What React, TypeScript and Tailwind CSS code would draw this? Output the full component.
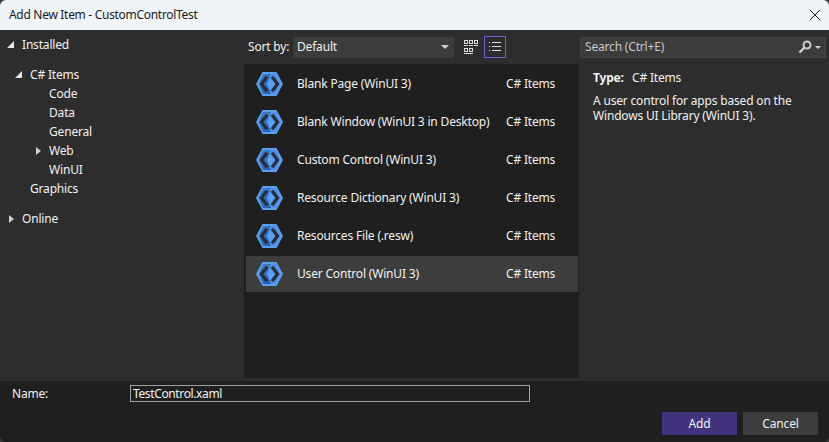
import { X } from 'lucide-react'
import type { ReactNode } from 'react'

const items = [
    'Blank Page (WinUI 3)',
    'Blank Window (WinUI 3 in Desktop)',
    'Custom Control (WinUI 3)',
    'Resource Dictionary (WinUI 3)',
    'Resources File (.resw)',
    'User Control (WinUI 3)',
]

function WinUiIcon() {
    return (
        <svg width="27" height="24" viewBox="0 0 27 24" className="shrink-0">
            <defs>
                <linearGradient id="winui-left" x1="0" y1="0" x2="1" y2="1">
                    <stop offset="0" stopColor="#3f86dc" />
                    <stop offset="1" stopColor="#1f5ca8" />
                </linearGradient>
            </defs>
            <polygon points="6.5,0 20.5,0 27,12 20.5,24 6.5,24 0,12" fill="#5a9ff0" />
            <polygon points="7,2 15,2 11,12 15,22 7,22 2.5,12" fill="url(#winui-left)" />
            <polygon points="15,2 20,2 24.5,12 20,22 15,22 19,12" fill="#4f8fe6" />
            <polygon points="9.5,4 12.5,5.5 7.5,12 12.5,18.5 9.5,20 3.5,12" fill="#2a2c32" />
            <polygon points="17.5,4 14.5,5.5 19.5,12 14.5,18.5 17.5,20 23.5,12" fill="#2a2c32" />
        </svg>
    )
}

function Expanded() {
    return <span className="w-0 h-0 border-l-[7px] border-l-transparent border-b-[7px] border-b-[#e6e6e6]" />
}

function Collapsed() {
    return <span className="w-0 h-0 border-y-[4px] border-y-transparent border-l-[5px] border-l-[#d0d0d0]" />
}

function TreeRow({ label, indent, icon }: { label: string; indent: string; icon?: ReactNode }) {
    return (
        <div className={`h-[19px] flex items-center ${indent}`}>
            {icon}
            <span>{label}</span>
        </div>
    )
}

export default function App() {
    return (
        <div className="w-[829px] h-[442px] bg-[#3a3a3a]">
            <div className="w-full h-full flex flex-col overflow-hidden rounded-[6px] bg-[#2d2d2d] text-[12px] tracking-[-0.18px] text-[#f1f1f1] font-['Noto_Sans','Open_Sans',sans-serif]">
                {/* Title bar */}
                <div className="h-[30px] shrink-0 bg-[#eff4f9] text-[#1a1a1a] flex items-center justify-between pl-[9px] pr-[4px]">
                    <span className="tracking-[-0.3px]">Add New Item - CustomControlTest</span>
                    <X size={20} strokeWidth={1.2} className="text-[#222] mb-[1px]" />
                </div>

                <div className="flex-1 flex min-h-0">
                    {/* Tree */}
                    <div className="w-[244px] shrink-0 pt-[5px]">
                        <TreeRow label="Installed" indent="pl-[7px] gap-[8px] mb-[11px]" icon={<Expanded />} />
                        <TreeRow label="C# Items" indent="pl-[15px] gap-[8px]" icon={<Expanded />} />
                        <TreeRow label="Code" indent="pl-[49px]" />
                        <TreeRow label="Data" indent="pl-[49px]" />
                        <TreeRow label="General" indent="pl-[49px]" />
                        <TreeRow label="Web" indent="pl-[36px] gap-[8px]" icon={<Collapsed />} />
                        <TreeRow label="WinUI" indent="pl-[49px]" />
                        <TreeRow label="Graphics" indent="pl-[30px]" />
                        <TreeRow label="Online" indent="pl-[9px] gap-[8px] mt-[11px]" icon={<Collapsed />} />
                    </div>

                    {/* Center */}
                    <div className="w-[335px] shrink-0 flex flex-col pb-[3px]">
                        <div className="h-[34px] shrink-0 flex items-center pl-[4px]">
                            <span className="w-[46px]">Sort by:</span>
                            <div className="w-[161px] h-[21px] ml-[-1px] bg-[#3c3c3c] flex items-center justify-between pl-[4px] pr-[5px]">
                                <span>Default</span>
                                <span className="w-0 h-0 border-x-[4px] border-x-transparent border-t-[4px] border-t-[#d0d0d0]" />
                            </div>
                            <div className="w-[23px] h-[22px] ml-[7px] pl-[3px] flex items-center">
                                <svg width="14" height="14" viewBox="0 0 14 14" fill="none" stroke="#e0e0e0">
                                    <rect x="0.5" y="0.5" width="3" height="3" /><rect x="5.5" y="0.5" width="3" height="3" /><rect x="10.5" y="0.5" width="3" height="3" />
                                    <path d="M0 5.5H4M5 5.5H9M10 5.5H14" />
                                    <rect x="0.5" y="8.5" width="3" height="3" /><rect x="5.5" y="8.5" width="3" height="3" />
                                    <path d="M0 13.5H9" />
                                </svg>
                            </div>
                            <div className="w-[22px] h-[22px] border border-[#6e5fe0] flex items-center justify-center">
                                <svg width="12" height="12" viewBox="0 0 12 12" fill="#e0e0e0">
                                    <rect x="0" y="1" width="1" height="1" /><rect x="3" y="1" width="9" height="1" />
                                    <rect x="0" y="5" width="1" height="1" /><rect x="3" y="5" width="9" height="1" />
                                    <rect x="0" y="9" width="1" height="1" /><rect x="3" y="9" width="9" height="1" />
                                </svg>
                            </div>
                        </div>
                        <div className="flex-1 bg-[#1f1f1f] pt-[1px]">
                            {items.map((item, index) => (
                                <div className="h-[38px] py-[1px] pl-[2px] pr-[1px]" key={index}>
                                    <div className={`h-full flex items-center pl-[10px] ${index === 5 ? 'bg-[#3d3d3d]' : ''}`}>
                                        <WinUiIcon />
                                        <span className="ml-[14px] w-[209px] whitespace-nowrap">{item}</span>
                                        <span>C# Items</span>
                                    </div>
                                </div>
                            ))}
                        </div>
                    </div>

                    {/* Details */}
                    <div className="flex-1 flex flex-col pl-[1px]">
                        <div className="h-[34px] shrink-0 flex items-center">
                            <div className="w-[246px] h-[21px] bg-[#3c3c3c] border border-[#444] flex items-center justify-between pl-[4px] pr-[4px] text-[#c8c8c8]">
                                <span>Search (Ctrl+E)</span>
                                <span className="flex items-center gap-[3px]">
                                    <svg width="14" height="14" viewBox="0 0 14 14" fill="none" stroke="#d0d0d0">
                                        <circle cx="9" cy="5" r="3.5" strokeWidth="2" />
                                        <path d="M6.5 7.5 L1.5 12.5" strokeWidth="2.4" />
                                    </svg>
                                    <span className="w-0 h-0 border-x-[3px] border-x-transparent border-t-[3px] border-t-[#d0d0d0]" />
                                </span>
                            </div>
                        </div>
                        <div className="pl-[13px] pt-[5px]">
                            <div className="h-[18px] flex items-center">
                                <span className="font-bold w-[39px]">Type:</span>
                                <span>C# Items</span>
                            </div>
                            <p className="mt-[6px] leading-[15px]">
                                A user control for apps based on the<br />Windows UI Library (WinUI 3).
                            </p>
                        </div>
                    </div>
                </div>

                {/* Footer */}
                <div className="h-[61px] shrink-0 bg-[#1f1f1f] pl-[12px] pt-[4px]">
                    <div className="flex items-center h-[17px]">
                        <span className="w-[118px]">Name:</span>
                        <div className="w-[400px] h-[17px] border border-[#a0a0a0] flex items-center pl-[2px] tracking-[-0.37px]">TestControl.xaml</div>
                    </div>
                    <div className="flex justify-end gap-[6px] pr-[11px] mt-[10px]">
                        <button className="w-[75px] h-[23px] bg-[#43337f]">Add</button>
                        <button className="w-[75px] h-[23px] bg-[#3d3d3d]">Cancel</button>
                    </div>
                </div>
            </div>
        </div>
    )
}
